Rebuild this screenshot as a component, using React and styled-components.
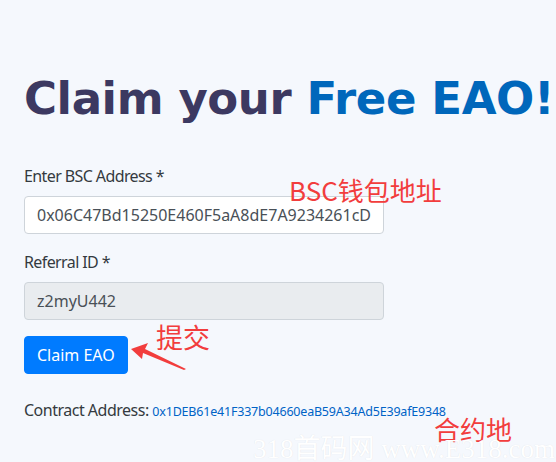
import React from 'react'
import styled, { createGlobalStyle } from 'styled-components'

const GlobalStyle = createGlobalStyle`
    body {
        margin: 0;
        background: #f5f8fd;
        font-family: 'Noto Sans', 'Open Sans', sans-serif;
        color: #333;
    }
`;

const Page = styled.div`
    position: relative;
    height: 462px;
    overflow: hidden;
    padding: 0 24px;
    display: flex;
    flex-direction: column;
    align-items: flex-start;
`;

const Title = styled.h1`
    margin: 0;
    padding-top: 69px;
    font-family: 'DejaVu Sans', sans-serif;
    font-weight: 700;
    font-size: 45px;
    line-height: 60px;
    white-space: nowrap;
    color: #3c3961;
    letter-spacing: -0.4px;

    span {
        color: #0067bb;
    }
`;

const Form = styled.form`
    margin-top: 35px;
    width: 360px;
    display: flex;
    flex-direction: column;
    align-items: flex-start;
    gap: 16px;
`;

const Group = styled.div`
    width: 100%;
    display: flex;
    flex-direction: column;
    gap: 8px;
`;

const Label = styled.label`
    font-size: 16px;
    line-height: 24px;
    letter-spacing: -0.6px;
    color: #343a40;
`;

const Input = styled.input`
    box-sizing: border-box;
    width: 100%;
    height: 38px;
    padding: 6px 12px;
    font-family: inherit;
    font-size: 16px;
    letter-spacing: 0;
    color: #495057;
    background: ${p => (p.readOnly ? '#e9ecef' : '#fff')};
    border: 1px solid #ced4da;
    border-radius: 4px;
    outline: none;
`;

const Button = styled.button`
    height: 38px;
    padding: 0 12px;
    font-family: inherit;
    font-size: 16px;
    color: #fff;
    background: #007bff;
    border: 1px solid #007bff;
    border-radius: 4px;
`;

const Contract = styled.p`
    margin: 24px 0 0;
    font-size: 16px;
    line-height: 24px;
    letter-spacing: -0.5px;
    color: #343a40;
    white-space: nowrap;

    a {
        font-size: 12.5px;
        letter-spacing: -0.2px;
        color: #0063c6;
        text-decoration: none;
    }
`;

const Note = styled.div`
    position: absolute;
    left: ${p => p.x}px;
    top: ${p => p.y}px;
    font-family: 'Noto Sans CJK SC', 'Noto Sans', sans-serif;
    font-size: ${p => p.size || 26}px;
    line-height: 1;
    color: #f23d3d;
    white-space: nowrap;
`;

const Watermark = styled.div`
    position: absolute;
    left: 253px;
    top: 436px;
    font-family: 'Liberation Serif', 'Noto Sans CJK SC', serif;
    font-size: 27px;
    line-height: 1;
    color: #fff;
    text-shadow: 0 0 1px rgba(0, 0, 0, 0.1);
    white-space: nowrap;
`;

const Arrow = () => (
    <svg width="60" height="30" viewBox="0 0 60 30" style={{ position: 'absolute', left: 129, top: 342 }}>
        <path d="M2 7 L19 1 L16 7 L57 27 L55 28 L14 11 L13 17 Z" fill="#f23d3d" />
    </svg>
);

const App = () => (
    <>
        <GlobalStyle />
        <Page>
            <Title>Claim your <span>Free EAO!</span></Title>
            <Form onSubmit={e => e.preventDefault()}>
                <Group>
                    <Label>Enter BSC Address *</Label>
                    <Input defaultValue="0x06C47Bd15250E460F5aA8dE7A9234261cD" />
                </Group>
                <Group>
                    <Label>Referral ID *</Label>
                    <Input readOnly value="z2myU442" />
                </Group>
                <Button type="submit">Claim EAO</Button>
            </Form>
            <Contract>
                Contract Address: <a href="#">0x1DEB61e41F337b04660eaB59A34Ad5E39afE9348</a>
            </Contract>

            <Note x={289} y={177} size={26}>BSC钱包地址</Note>
            <Note x={156} y={323} size={27}>提交</Note>
            <Note x={434} y={416} size={26}>合约地</Note>
            <Arrow />
            <Watermark>318首码网 www.E318.com</Watermark>
        </Page>
    </>
)

export default App
